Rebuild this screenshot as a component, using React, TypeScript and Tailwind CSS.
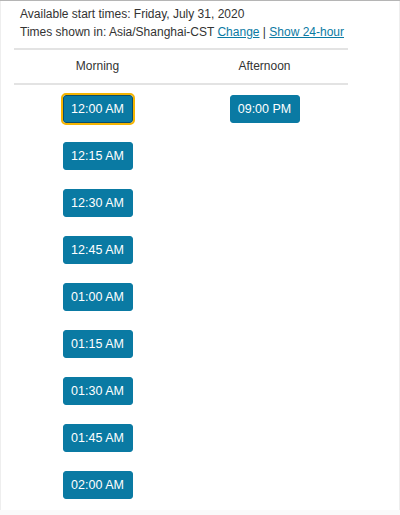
import React from "react"

const morning = [
	"12:00 AM",
	"12:15 AM",
	"12:30 AM",
	"12:45 AM",
	"01:00 AM",
	"01:15 AM",
	"01:30 AM",
	"01:45 AM",
	"02:00 AM",
]
const afternoon = ["09:00 PM"]

const TimeButton = ({ label, focused }: { label: string; focused?: boolean }) => (
	<button
		className={
			focused
				? "h-[28px] w-[70px] rounded-[3px] border border-[#0b4f6c] bg-[#0a7aa3] text-[12.5px] text-white outline-2 outline-[#f5b400]"
				: "h-[28px] w-[70px] rounded-[3px] border border-[#0a7aa3] bg-[#0a7aa3] text-[12.5px] text-white"
		}
	>
		{label}
	</button>
)

export default function App() {
	return (
		<div
			className="flex h-[515px] w-[400px] flex-col border-t border-t-[#b5b5b5] bg-white text-[#333]"
			style={{ fontFamily: '"Liberation Sans", Arial, sans-serif' }}
		>
			<div className="flex flex-1 flex-col border-x border-x-[#eeeeee]">
				<div className="px-[19px] pt-[4px] text-[12px] leading-[18px]">
					<p>Available start times: Friday, July 31, 2020</p>
					<p>
						Times shown in: Asia/Shanghai-CST{" "}
						<a href="#" className="text-[#0a7aa3] underline">
							Change
						</a>{" "}
						|{" "}
						<a href="#" className="text-[#0a7aa3] underline">
							Show 24-hour
						</a>
					</p>
				</div>
				<div className="mx-[13px] mt-[7px] w-[334px]">
					<div className="grid grid-cols-2 border-y-2 border-y-[#e3e3e3] py-[8px] text-center text-[12px] leading-[17px]">
						<span>Morning</span>
						<span>Afternoon</span>
					</div>
					<div className="grid grid-cols-2 pt-[10px]">
						<div className="flex flex-col items-center gap-[19px]">
							{morning.map((t, i) => (
								<TimeButton key={t} label={t} focused={i === 0} />
							))}
						</div>
						<div className="flex flex-col items-center gap-[19px]">
							{afternoon.map((t) => (
								<TimeButton key={t} label={t} />
							))}
						</div>
					</div>
				</div>
			</div>
			<div className="h-[5px] bg-[#fafafa]" />
		</div>
	)
}
